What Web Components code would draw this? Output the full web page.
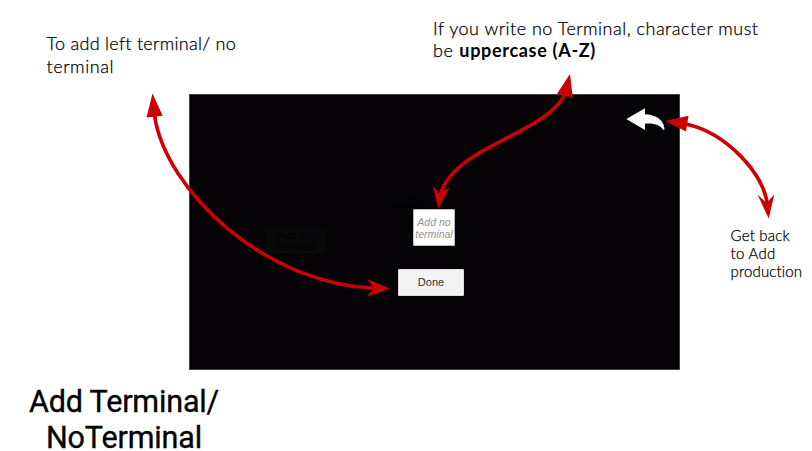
<!DOCTYPE html>
<html lang="en"><head><meta charset="utf-8"><title>Add Terminal/NoTerminal</title>
<style>html,body{margin:0;background:#fff}</style></head><body>
<guide-slide></guide-slide>
<script>
// One line of text whose tracking is adjusted to a given width.
customElements.define('fit-line', class extends HTMLElement {
  connectedCallback() {
    this.attachShadow({mode:'open'}).innerHTML = `<style>
      :host{display:block;white-space:nowrap;margin-left:var(--indent,0)}
      span{display:inline-block}</style><span><slot></slot></span>`;
    const s = this.shadowRoot.querySelector('span'), w = +this.getAttribute('width');
    const n = this.textContent.length;
    if (w) s.style.letterSpacing = (w - s.getBoundingClientRect().width) / n + 'px';
  }
});
customElements.define('callout-note', class extends HTMLElement {
  connectedCallback() {
    this.attachShadow({mode:'open'}).innerHTML = `<style>
      :host{display:block;position:absolute;color:#000;font-family:Lato,"Open Sans",sans-serif;font-weight:300;-webkit-text-stroke:.25px #000}</style><slot></slot>`;
  }
});
customElements.define('app-button', class extends HTMLElement {
  connectedCallback() {
    this.attachShadow({mode:'open'}).innerHTML = `<style>
      :host{display:flex;position:absolute;box-sizing:border-box;align-items:center;justify-content:center;text-align:center;
      border-radius:1px;font-family:"Liberation Sans",Arial,sans-serif}</style><div><slot></slot></div>`;
  }
});
customElements.define('app-screen', class extends HTMLElement {
  connectedCallback() {
    this.attachShadow({mode:'open'}).innerHTML = `<style>
      :host{display:block;position:absolute;left:189px;top:94px;width:491px;height:276px;box-sizing:border-box;background:#050306;border:1px solid #414343}
      svg{position:absolute;left:-1px;top:-1px}
      .ghost{left:75px;top:134px;width:61px;height:24px;background:#09090a;color:#000;font-size:10.5px;line-height:12px}
      .field{left:223px;top:114px;width:42px;height:37px;background:#fff;border:1px solid #bbb9bc;color:#929292;font-size:10.5px;line-height:12px;font-style:italic}
      .done{left:208px;top:174px;width:66px;height:27px;background:#f4f4f4;border:1px solid #ddd;color:#303030;font-size:11px;line-height:13px}
    </style>
    <svg width="491" height="276" viewBox="189 94 491 276">
      <path d="M390 206.5H423M410 195L424 206.5L410 218" fill="none" stroke="#000" stroke-width="3"/>
      <path d="M626.3 119L645 108.3V114.2C656 114.5 664.5 120 664.5 129.7H663C660 125 654 122.8 645 123.7V130Z" fill="#fff"/>
    </svg>
    <app-button class="ghost">Add No<br>Terminal</app-button>
    <app-button class="field">Add no<br>terminal</app-button>
    <app-button class="done">Done</app-button>`;
  }
});
customElements.define('callout-arrows', class extends HTMLElement {
  connectedCallback() {
    this.attachShadow({mode:'open'}).innerHTML = `<style>
      :host{display:block;position:absolute;inset:0}svg{display:block}</style>
    <svg width="812" height="451" viewBox="0 0 812 451">
      <g fill="none" stroke="#c00" stroke-width="3.6">
        <path d="M154.5 115C165 190 265 285 376 288.3"/>
        <path d="M565 94C545 135 455 145 440 195"/>
        <path d="M686 124C727 133 765 175 767.3 205"/>
      </g>
      <g fill="#c00">
        <path d="M152.5 93.5L162.7 115.8L146.5 117.5Z"/>
        <path d="M390 288.6L366.5 296.8L374 288.3L367.5 279.2Z"/>
        <path d="M570 74L572.8 97.7L557 93.8Z"/>
        <path d="M438.3 208.8L432.5 185L439 193.5L449.5 187.5Z"/>
        <path d="M665 121L688.5 115.7L686 131.5Z"/>
        <path d="M768.7 218.5L757.5 194.5L766.5 203L774.3 194.5Z"/>
      </g>
    </svg>`;
  }
});
customElements.define('guide-slide', class extends HTMLElement {
  connectedCallback() {
    this.attachShadow({mode:'open'}).innerHTML = `<style>
      :host{display:block;position:relative;width:812px;height:451px;background:#fff}
      .left{left:46.5px;top:32px;font-size:18px;line-height:23px}
      .right{left:433px;top:17px;font-size:18px;line-height:22px}
      .back{left:730.5px;top:226px;font-size:15px;line-height:18px}
      .title{left:29px;top:384px;height:67px;font-family:Roboto,sans-serif;font-weight:400;font-size:30.5px;line-height:36px;-webkit-text-stroke:.35px #000}
      b{font-weight:700;-webkit-text-stroke:0}
    </style>
    <app-screen></app-screen>
    <callout-arrows></callout-arrows>
    <callout-note class="left"><fit-line width="189">To add left terminal/ no</fit-line><fit-line width="67.5">terminal</fit-line></callout-note>
    <callout-note class="right"><fit-line width="325.5">If you write no Terminal, character must</fit-line><fit-line width="163">be <b>uppercase (A-Z)</b></fit-line></callout-note>
    <callout-note class="back"><fit-line width="59.5">Get back</fit-line><fit-line width="45">to Add</fit-line><fit-line width="72">production</fit-line></callout-note>
    <callout-note class="title"><fit-line width="190">Add Terminal/</fit-line><fit-line width="156" style="--indent:17px">NoTerminal</fit-line></callout-note>`;
  }
});
</script></body></html>
